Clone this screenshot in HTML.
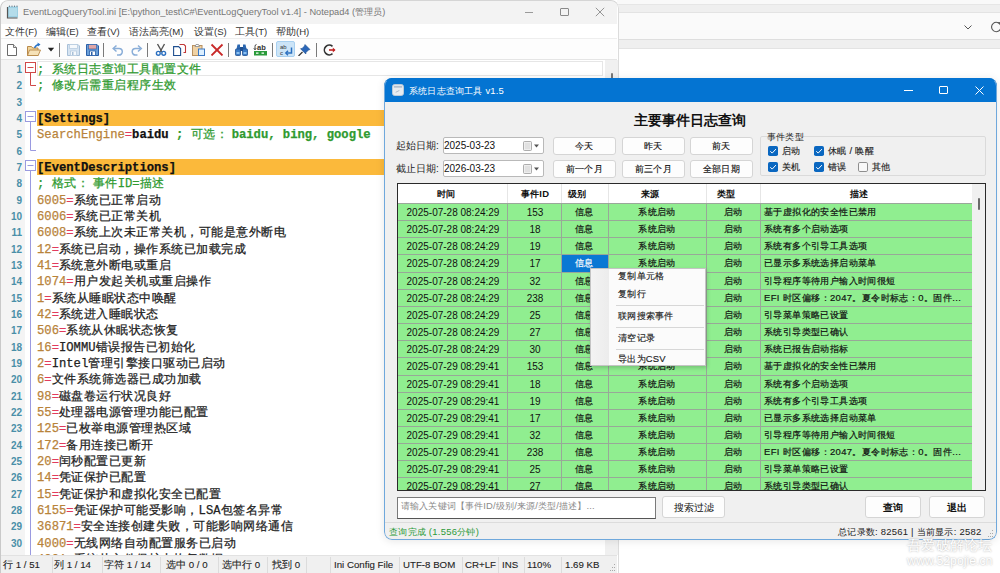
<!DOCTYPE html><html><head><meta charset="utf-8"><style>
*{box-sizing:border-box}
html,body{margin:0;padding:0}
body{width:1000px;height:573px;overflow:hidden;position:relative;background:#fff;font-family:"Liberation Sans",sans-serif;}
.a{position:absolute}
.t{position:absolute;white-space:nowrap}
</style></head><body>
<div class="a" style="left:0;top:0;width:1000px;height:573px;background:#fff"></div><div class="a" style="left:617px;top:0;width:383px;height:4px;background:#f9f9f9"></div><div class="a" style="left:617px;top:4px;width:383px;height:9px;background:#efefef;border-top:1px solid #e6e6e6;border-bottom:1px solid #e3e3e3"></div><div class="a" style="left:617px;top:13px;width:383px;height:26px;background:#fafafa"></div><div class="a" style="left:617px;top:39px;width:383px;height:10px;background:#efefef;border-top:1px solid #dedede;border-bottom:1px solid #e3e3e3"></div><svg class="a" style="left:961px;top:23px" width="14" height="10" viewBox="0 0 14 10"><path d="M3.5 2.5 L7 6 L10.5 2.5" stroke="#555" stroke-width="1" fill="none"/></svg><svg class="a" style="left:990px;top:21px" width="12" height="12" viewBox="0 0 12 12"><path d="M10.5 4 A4.7 4.7 0 1 0 10.5 8" stroke="#555" stroke-width="1.1" fill="none"/><path d="M8 1.8 L10.8 1.5 L10.6 4.4" stroke="#555" stroke-width="1" fill="none"/></svg><div class="a" style="left:0;top:0;width:619px;height:573px;background:#fff;border-top-right-radius:8px;border-top-left-radius:8px;overflow:hidden"><div class="a" style="left:0;top:0;width:617px;height:24px;background:#f3f3f3"></div><svg class="a" style="left:6px;top:5px" width="14" height="14" viewBox="0 0 14 14"><rect x="2" y="1.5" width="10" height="11" fill="#9ccfe2"/><rect x="3" y="3" width="8" height="8" fill="#b4dcea"/><path d="M1.5 2v11h10" stroke="#555" stroke-width="1.2" fill="none"/><path d="M3 1.2h1M5.5 1.2h1M8 1.2h1M10.5 1.2h1" stroke="#456" stroke-width="1"/></svg><div class="t" style="left:23px;top:6px;font-size:9.25px;line-height:13px;color:#767676">EventLogQueryTool.ini [E:\python_test\C#\EventLogQueryTool v1.4] - Notepad4 (管理员)</div><div class="a" style="left:525px;top:12px;width:8px;height:1px;background:#9a9a9a"></div><div class="a" style="left:560px;top:8px;width:9px;height:8px;border:1px solid #8a8a8a;border-radius:1px"></div><svg class="a" style="left:595px;top:7px" width="10" height="10" viewBox="0 0 10 10"><path d="M0.8 0.8L9.2 9.2M9.2 0.8L0.8 9.2" stroke="#8a8a8a" stroke-width="0.9"/></svg><div class="a" style="left:0;top:24px;width:617px;height:15px;background:#fff;border-bottom:1px solid #eeeeee"></div><div class="t" style="left:5px;top:26px;font-size:9.6px;line-height:12px;color:#333">文件(F)</div><div class="t" style="left:46px;top:26px;font-size:9.6px;line-height:12px;color:#333">编辑(E)</div><div class="t" style="left:87px;top:26px;font-size:9.6px;line-height:12px;color:#333">查看(V)</div><div class="t" style="left:129px;top:26px;font-size:9.6px;line-height:12px;color:#333">语法高亮(M)</div><div class="t" style="left:194px;top:26px;font-size:9.6px;line-height:12px;color:#333">设置(S)</div><div class="t" style="left:235px;top:26px;font-size:9.6px;line-height:12px;color:#333">工具(T)</div><div class="t" style="left:276px;top:26px;font-size:9.6px;line-height:12px;color:#333">帮助(H)</div><div class="a" style="left:0;top:39px;width:617px;height:21px;background:#fdfdfd;border-bottom:1px solid #e5e5e5"></div><svg class="a" style="left:0px;top:40px" width="20" height="16" viewBox="0 0 20 16"><path d="M7.5 4.5h6l3 3v8h-9z" fill="#fff" stroke="#6a6a6a" stroke-width="1"/><path d="M13.5 4.5v3h3" fill="#e8e8e8" stroke="#6a6a6a" stroke-width="0.9"/></svg><svg class="a" style="left:24px;top:40px" width="20" height="16" viewBox="0 0 20 16"><path d="M3.5 6.5h4l1.2 1.5h5.3v7.5h-10.5z" fill="#f0d49a" stroke="#b8894a" stroke-width="1"/><path d="M3.5 15.5l2-5.5h11l-2.3 5.5z" fill="#f6e2b8" stroke="#b8894a" stroke-width="0.9"/><path d="M10.5 8 Q12 4.8 14.5 4.5" stroke="#2a74c8" stroke-width="1.5" fill="none"/><path d="M13.5 2.6l3 1.9-2.6 2.1z" fill="#2a74c8"/></svg><svg class="a" style="left:47px;top:47px" width="8" height="5" viewBox="0 0 8 5"><path d="M0.8 0.8h6.4l-3.2 3.6z" fill="#222"/></svg><div class="a" style="left:59px;top:43px;width:1px;height:14px;background:#7a7a7a"></div><svg class="a" style="left:64px;top:40px" width="20" height="16" viewBox="0 0 20 16"><path d="M3.5 4.5h10.5l1.5 1.5v9.5h-12z" fill="#d6e4f2" stroke="#a8c0d8" stroke-width="1"/><rect x="5.5" y="4.5" width="8" height="4" fill="#f6f9fc" stroke="#b8cce0" stroke-width="0.8"/><rect x="6.5" y="11" width="6" height="4.5" fill="#f6f9fc" stroke="#b8cce0" stroke-width="0.8"/><rect x="8" y="12" width="1.5" height="3" fill="#a8c0d8"/></svg><svg class="a" style="left:83px;top:40px" width="20" height="16" viewBox="0 0 20 16"><path d="M3.5 4.5h10.5l1.5 1.5v9.5h-12z" fill="#6a9fd8" stroke="#2a5fa8" stroke-width="1"/><rect x="5.5" y="4.5" width="8" height="4.5" fill="#fff" stroke="#2a5fa8" stroke-width="0.7"/><path d="M5.8 6h7.4M5.8 8h7.4" stroke="#b83a3a" stroke-width="0.9"/><rect x="6.5" y="11" width="6" height="4.5" fill="#fff" stroke="#2a5fa8" stroke-width="0.8"/><rect x="8" y="12" width="1.5" height="3.5" fill="#2a5fa8"/></svg><div class="a" style="left:103px;top:43px;width:1px;height:14px;background:#7a7a7a"></div><svg class="a" style="left:108px;top:40px" width="20" height="16" viewBox="0 0 20 16"><path d="M6 8.5 H11 A3.3 3.3 0 0 1 11 15.1 H9" fill="none" stroke="#8aaed8" stroke-width="1.5"/><path d="M8.5 5.5 L5.2 8.5 L8.5 11.5" fill="none" stroke="#8aaed8" stroke-width="1.5"/></svg><svg class="a" style="left:127px;top:40px" width="20" height="16" viewBox="0 0 20 16"><path d="M13.5 8.5 H8.5 A3.3 3.3 0 0 0 8.5 15.1 H10.5" fill="none" stroke="#8aaed8" stroke-width="1.5"/><path d="M11 5.5 L14.3 8.5 L11 11.5" fill="none" stroke="#8aaed8" stroke-width="1.5"/></svg><div class="a" style="left:147px;top:43px;width:1px;height:14px;background:#7a7a7a"></div><svg class="a" style="left:152px;top:40px" width="20" height="16" viewBox="0 0 20 16"><path d="M5.5 4 L10 12 M12.5 4 L8 12" stroke="#555" stroke-width="1.4"/><circle cx="6.3" cy="13.3" r="1.9" fill="none" stroke="#2a6fc0" stroke-width="1.4"/><circle cx="11.7" cy="13.3" r="1.9" fill="none" stroke="#2a6fc0" stroke-width="1.4"/></svg><svg class="a" style="left:170px;top:40px" width="20" height="16" viewBox="0 0 20 16"><path d="M9.5 4.5h4.5l1.5 1.5v6.5h-2" fill="none" stroke="#c03838" stroke-width="1.1"/><path d="M3.6 6.6h5l2 2v6.9h-7z" fill="#fff" stroke="#1f4f8f" stroke-width="1.1"/></svg><svg class="a" style="left:189px;top:40px" width="20" height="16" viewBox="0 0 20 16"><rect x="3.5" y="5.5" width="9.5" height="10" fill="#f0d2a4" stroke="#b89060" stroke-width="1"/><path d="M6 6.5 L7 4.5 H9.5 L10.5 6.5 Z" fill="#fff" stroke="#888" stroke-width="0.8"/><rect x="9.5" y="9" width="6" height="6.5" fill="#dcefff" stroke="#3a78c4" stroke-width="1"/></svg><svg class="a" style="left:208px;top:40px" width="20" height="16" viewBox="0 0 20 16"><path d="M3.5 4.5 L14.5 15.5 M14.5 4.5 L3.5 15.5" stroke="#c82828" stroke-width="1.8"/></svg><div class="a" style="left:228px;top:43px;width:1px;height:14px;background:#7a7a7a"></div><svg class="a" style="left:232px;top:40px" width="20" height="16" viewBox="0 0 20 16"><path d="M4.5 9 L5.5 4.5 H8 V9 Z M11 9 V4.5 H13.5 L14.5 9 Z" fill="#2a66b0"/><rect x="3.5" y="9" width="5" height="6.5" rx="0.8" fill="#3a7cc8" stroke="#1f4f8f" stroke-width="0.8"/><rect x="10.5" y="9" width="5" height="6.5" rx="0.8" fill="#3a7cc8" stroke="#1f4f8f" stroke-width="0.8"/><rect x="8" y="7" width="3" height="4" fill="#1f4f8f"/><rect x="4.5" y="12" width="3" height="2" fill="#8cc0f0"/><rect x="11.5" y="12" width="3" height="2" fill="#8cc0f0"/></svg><svg class="a" style="left:251px;top:40px" width="20" height="16" viewBox="0 0 20 16"><path d="M5.5 4.5 Q4 4.5 4 6.5 V9.5 M2.8 8.3 L4 9.8 L5.2 8.3" stroke="#333" stroke-width="0.9" fill="none"/><text x="6" y="10" font-family="Liberation Sans" font-size="7.5" font-weight="bold" fill="#333">ab</text><rect x="3" y="11" width="13" height="4.5" fill="#2a9a3a"/><path d="M5 13.2h2.5M10.5 13.2h2.5" stroke="#fff" stroke-width="1.3"/></svg><div class="a" style="left:272px;top:43px;width:1px;height:14px;background:#7a7a7a"></div><div class="a" style="left:276px;top:41px;width:19px;height:16px;background:#cce4f7;border:1px solid #a8d0f0;border-radius:2px"></div><svg class="a" style="left:277px;top:40px" width="20" height="16" viewBox="0 0 20 16"><text x="3" y="8.5" font-family="Liberation Sans" font-size="6" fill="#333">ab</text><text x="3" y="14.5" font-family="Liberation Sans" font-size="6" fill="#333">c</text><path d="M14.5 7.5 V13 H9.5" stroke="#2a6fc0" stroke-width="1.5" fill="none"/><path d="M11 10.8 L8.8 13 L11 15.2" stroke="#2a6fc0" stroke-width="1.4" fill="none"/></svg><svg class="a" style="left:295px;top:40px" width="20" height="16" viewBox="0 0 20 16"><path d="M10 4.5 L15 9.5 L13.5 10 L11 12.5 L10.8 14 L5.5 8.7 L7 8.5 L9.5 6 Z" fill="#2a66b8" stroke="#1f4f8f" stroke-width="0.6"/><path d="M7.5 12 L3.5 16" stroke="#333" stroke-width="1.2"/></svg><div class="a" style="left:316px;top:43px;width:1px;height:14px;background:#7a7a7a"></div><svg class="a" style="left:320px;top:40px" width="20" height="16" viewBox="0 0 20 16"><path d="M12.5 6.3 A4.9 4.9 0 1 0 12.5 13.7" stroke="#333" stroke-width="1.6" fill="none"/><path d="M9 10 H14.5" stroke="#c02020" stroke-width="1.6"/><path d="M12.8 7.5 L15.5 10 L12.8 12.5 Z" fill="#c02020"/></svg><div class="a" style="left:0;top:60px;width:25px;height:495px;background:#f4f4f4"></div><div class="a" style="left:37px;top:61px;width:566px;height:15px;border:1px solid #e6e6e6"></div><div class="a" style="left:605px;top:60px;width:13px;height:495px;background:#f0f0f0"></div><div class="a" style="left:611px;top:73px;width:1.5px;height:6px;background:#777;border-radius:1px"></div><div class="t" style="left:0;top:62.00px;width:22px;text-align:right;font-family:'Liberation Sans',sans-serif;font-size:10px;font-weight:bold;line-height:16px;color:#4a8fa8">1</div><div class="t" style="left:37px;top:62.00px;font-family:'Liberation Mono',monospace;font-size:12.2px;line-height:16px;-webkit-text-stroke:0.25px currentColor;color:#2f9a2f">; <span style="font-size:12.45px;font-weight:500;letter-spacing:0.5px">系统日志查询工具配置文件</span></div><div class="t" style="left:0;top:78.33px;width:22px;text-align:right;font-family:'Liberation Sans',sans-serif;font-size:10px;font-weight:bold;line-height:16px;color:#4a8fa8">2</div><div class="t" style="left:37px;top:78.33px;font-family:'Liberation Mono',monospace;font-size:12.2px;line-height:16px;-webkit-text-stroke:0.25px currentColor;color:#2f9a2f">; <span style="font-size:12.45px;font-weight:500;letter-spacing:0.5px">修改后需重启程序生效</span></div><div class="t" style="left:0;top:94.66px;width:22px;text-align:right;font-family:'Liberation Sans',sans-serif;font-size:10px;font-weight:bold;line-height:16px;color:#4a8fa8">3</div><div class="t" style="left:0;top:110.99px;width:22px;text-align:right;font-family:'Liberation Sans',sans-serif;font-size:10px;font-weight:bold;line-height:16px;color:#4a8fa8">4</div><div class="a" style="left:37px;top:109.99px;width:567px;height:16px;background:#fbb93b"></div><div class="t" style="left:37px;top:110.99px;font-family:'Liberation Mono',monospace;font-size:12.2px;line-height:16px;-webkit-text-stroke:0.25px currentColor;color:#111;font-weight:bold">[Settings]</div><div class="t" style="left:0;top:127.32px;width:22px;text-align:right;font-family:'Liberation Sans',sans-serif;font-size:10px;font-weight:bold;line-height:16px;color:#4a8fa8">5</div><div class="t" style="left:37px;top:127.32px;font-family:'Liberation Mono',monospace;font-size:12.2px;line-height:16px;-webkit-text-stroke:0.25px currentColor;color:#b8833a">SearchEngine<span style="color:#e23c5c">=</span><span style="color:#111;font-weight:bold">baidu</span><span style="color:#2f9a2f;font-weight:bold"> ; <span style="font-size:12.45px;font-weight:500;letter-spacing:0.5px">可选<span style="margin-right:3.5px">：</span></span>baidu, bing, google</span></div><div class="t" style="left:0;top:143.65px;width:22px;text-align:right;font-family:'Liberation Sans',sans-serif;font-size:10px;font-weight:bold;line-height:16px;color:#4a8fa8">6</div><div class="t" style="left:0;top:159.98px;width:22px;text-align:right;font-family:'Liberation Sans',sans-serif;font-size:10px;font-weight:bold;line-height:16px;color:#4a8fa8">7</div><div class="a" style="left:37px;top:158.98px;width:567px;height:16px;background:#fbb93b"></div><div class="t" style="left:37px;top:159.98px;font-family:'Liberation Mono',monospace;font-size:12.2px;line-height:16px;-webkit-text-stroke:0.25px currentColor;color:#111;font-weight:bold">[EventDescriptions]</div><div class="t" style="left:0;top:176.31px;width:22px;text-align:right;font-family:'Liberation Sans',sans-serif;font-size:10px;font-weight:bold;line-height:16px;color:#4a8fa8">8</div><div class="t" style="left:37px;top:176.31px;font-family:'Liberation Mono',monospace;font-size:12.2px;line-height:16px;-webkit-text-stroke:0.25px currentColor;color:#2f9a2f">; <span style="font-size:12.45px;font-weight:500;letter-spacing:0.5px">格式<span style="margin-right:3.5px">：</span>事件</span>ID=<span style="font-size:12.45px;font-weight:500;letter-spacing:0.5px">描述</span></div><div class="t" style="left:0;top:192.64px;width:22px;text-align:right;font-family:'Liberation Sans',sans-serif;font-size:10px;font-weight:bold;line-height:16px;color:#4a8fa8">9</div><div class="t" style="left:37px;top:192.64px;font-family:'Liberation Mono',monospace;font-size:12.2px;line-height:16px;-webkit-text-stroke:0.25px currentColor;color:#b8833a">6005<span style="color:#e23c5c">=</span><span style="color:#222"><span style="font-size:12.45px;font-weight:500;letter-spacing:0.5px">系统已正常启动</span></span></div><div class="t" style="left:0;top:208.97px;width:22px;text-align:right;font-family:'Liberation Sans',sans-serif;font-size:10px;font-weight:bold;line-height:16px;color:#4a8fa8">10</div><div class="t" style="left:37px;top:208.97px;font-family:'Liberation Mono',monospace;font-size:12.2px;line-height:16px;-webkit-text-stroke:0.25px currentColor;color:#b8833a">6006<span style="color:#e23c5c">=</span><span style="color:#222"><span style="font-size:12.45px;font-weight:500;letter-spacing:0.5px">系统已正常关机</span></span></div><div class="t" style="left:0;top:225.30px;width:22px;text-align:right;font-family:'Liberation Sans',sans-serif;font-size:10px;font-weight:bold;line-height:16px;color:#4a8fa8">11</div><div class="t" style="left:37px;top:225.30px;font-family:'Liberation Mono',monospace;font-size:12.2px;line-height:16px;-webkit-text-stroke:0.25px currentColor;color:#b8833a">6008<span style="color:#e23c5c">=</span><span style="color:#222"><span style="font-size:12.45px;font-weight:500;letter-spacing:0.5px">系统上次未正常关机，可能是意外断电</span></span></div><div class="t" style="left:0;top:241.63px;width:22px;text-align:right;font-family:'Liberation Sans',sans-serif;font-size:10px;font-weight:bold;line-height:16px;color:#4a8fa8">12</div><div class="t" style="left:37px;top:241.63px;font-family:'Liberation Mono',monospace;font-size:12.2px;line-height:16px;-webkit-text-stroke:0.25px currentColor;color:#b8833a">12<span style="color:#e23c5c">=</span><span style="color:#222"><span style="font-size:12.45px;font-weight:500;letter-spacing:0.5px">系统已启动，操作系统已加载完成</span></span></div><div class="t" style="left:0;top:257.96px;width:22px;text-align:right;font-family:'Liberation Sans',sans-serif;font-size:10px;font-weight:bold;line-height:16px;color:#4a8fa8">13</div><div class="t" style="left:37px;top:257.96px;font-family:'Liberation Mono',monospace;font-size:12.2px;line-height:16px;-webkit-text-stroke:0.25px currentColor;color:#b8833a">41<span style="color:#e23c5c">=</span><span style="color:#222"><span style="font-size:12.45px;font-weight:500;letter-spacing:0.5px">系统意外断电或重启</span></span></div><div class="t" style="left:0;top:274.29px;width:22px;text-align:right;font-family:'Liberation Sans',sans-serif;font-size:10px;font-weight:bold;line-height:16px;color:#4a8fa8">14</div><div class="t" style="left:37px;top:274.29px;font-family:'Liberation Mono',monospace;font-size:12.2px;line-height:16px;-webkit-text-stroke:0.25px currentColor;color:#b8833a">1074<span style="color:#e23c5c">=</span><span style="color:#222"><span style="font-size:12.45px;font-weight:500;letter-spacing:0.5px">用户发起关机或重启操作</span></span></div><div class="t" style="left:0;top:290.62px;width:22px;text-align:right;font-family:'Liberation Sans',sans-serif;font-size:10px;font-weight:bold;line-height:16px;color:#4a8fa8">15</div><div class="t" style="left:37px;top:290.62px;font-family:'Liberation Mono',monospace;font-size:12.2px;line-height:16px;-webkit-text-stroke:0.25px currentColor;color:#b8833a">1<span style="color:#e23c5c">=</span><span style="color:#222"><span style="font-size:12.45px;font-weight:500;letter-spacing:0.5px">系统从睡眠状态中唤醒</span></span></div><div class="t" style="left:0;top:306.95px;width:22px;text-align:right;font-family:'Liberation Sans',sans-serif;font-size:10px;font-weight:bold;line-height:16px;color:#4a8fa8">16</div><div class="t" style="left:37px;top:306.95px;font-family:'Liberation Mono',monospace;font-size:12.2px;line-height:16px;-webkit-text-stroke:0.25px currentColor;color:#b8833a">42<span style="color:#e23c5c">=</span><span style="color:#222"><span style="font-size:12.45px;font-weight:500;letter-spacing:0.5px">系统进入睡眠状态</span></span></div><div class="t" style="left:0;top:323.28px;width:22px;text-align:right;font-family:'Liberation Sans',sans-serif;font-size:10px;font-weight:bold;line-height:16px;color:#4a8fa8">17</div><div class="t" style="left:37px;top:323.28px;font-family:'Liberation Mono',monospace;font-size:12.2px;line-height:16px;-webkit-text-stroke:0.25px currentColor;color:#b8833a">506<span style="color:#e23c5c">=</span><span style="color:#222"><span style="font-size:12.45px;font-weight:500;letter-spacing:0.5px">系统从休眠状态恢复</span></span></div><div class="t" style="left:0;top:339.61px;width:22px;text-align:right;font-family:'Liberation Sans',sans-serif;font-size:10px;font-weight:bold;line-height:16px;color:#4a8fa8">18</div><div class="t" style="left:37px;top:339.61px;font-family:'Liberation Mono',monospace;font-size:12.2px;line-height:16px;-webkit-text-stroke:0.25px currentColor;color:#b8833a">16<span style="color:#e23c5c">=</span><span style="color:#222">IOMMU<span style="font-size:12.45px;font-weight:500;letter-spacing:0.5px">错误报告已初始化</span></span></div><div class="t" style="left:0;top:355.94px;width:22px;text-align:right;font-family:'Liberation Sans',sans-serif;font-size:10px;font-weight:bold;line-height:16px;color:#4a8fa8">19</div><div class="t" style="left:37px;top:355.94px;font-family:'Liberation Mono',monospace;font-size:12.2px;line-height:16px;-webkit-text-stroke:0.25px currentColor;color:#b8833a">2<span style="color:#e23c5c">=</span><span style="color:#222">Intel<span style="font-size:12.45px;font-weight:500;letter-spacing:0.5px">管理引擎接口驱动已启动</span></span></div><div class="t" style="left:0;top:372.27px;width:22px;text-align:right;font-family:'Liberation Sans',sans-serif;font-size:10px;font-weight:bold;line-height:16px;color:#4a8fa8">20</div><div class="t" style="left:37px;top:372.27px;font-family:'Liberation Mono',monospace;font-size:12.2px;line-height:16px;-webkit-text-stroke:0.25px currentColor;color:#b8833a">6<span style="color:#e23c5c">=</span><span style="color:#222"><span style="font-size:12.45px;font-weight:500;letter-spacing:0.5px">文件系统筛选器已成功加载</span></span></div><div class="t" style="left:0;top:388.60px;width:22px;text-align:right;font-family:'Liberation Sans',sans-serif;font-size:10px;font-weight:bold;line-height:16px;color:#4a8fa8">21</div><div class="t" style="left:37px;top:388.60px;font-family:'Liberation Mono',monospace;font-size:12.2px;line-height:16px;-webkit-text-stroke:0.25px currentColor;color:#b8833a">98<span style="color:#e23c5c">=</span><span style="color:#222"><span style="font-size:12.45px;font-weight:500;letter-spacing:0.5px">磁盘卷运行状况良好</span></span></div><div class="t" style="left:0;top:404.93px;width:22px;text-align:right;font-family:'Liberation Sans',sans-serif;font-size:10px;font-weight:bold;line-height:16px;color:#4a8fa8">22</div><div class="t" style="left:37px;top:404.93px;font-family:'Liberation Mono',monospace;font-size:12.2px;line-height:16px;-webkit-text-stroke:0.25px currentColor;color:#b8833a">55<span style="color:#e23c5c">=</span><span style="color:#222"><span style="font-size:12.45px;font-weight:500;letter-spacing:0.5px">处理器电源管理功能已配置</span></span></div><div class="t" style="left:0;top:421.26px;width:22px;text-align:right;font-family:'Liberation Sans',sans-serif;font-size:10px;font-weight:bold;line-height:16px;color:#4a8fa8">23</div><div class="t" style="left:37px;top:421.26px;font-family:'Liberation Mono',monospace;font-size:12.2px;line-height:16px;-webkit-text-stroke:0.25px currentColor;color:#b8833a">125<span style="color:#e23c5c">=</span><span style="color:#222"><span style="font-size:12.45px;font-weight:500;letter-spacing:0.5px">已枚举电源管理热区域</span></span></div><div class="t" style="left:0;top:437.59px;width:22px;text-align:right;font-family:'Liberation Sans',sans-serif;font-size:10px;font-weight:bold;line-height:16px;color:#4a8fa8">24</div><div class="t" style="left:37px;top:437.59px;font-family:'Liberation Mono',monospace;font-size:12.2px;line-height:16px;-webkit-text-stroke:0.25px currentColor;color:#b8833a">172<span style="color:#e23c5c">=</span><span style="color:#222"><span style="font-size:12.45px;font-weight:500;letter-spacing:0.5px">备用连接已断开</span></span></div><div class="t" style="left:0;top:453.92px;width:22px;text-align:right;font-family:'Liberation Sans',sans-serif;font-size:10px;font-weight:bold;line-height:16px;color:#4a8fa8">25</div><div class="t" style="left:37px;top:453.92px;font-family:'Liberation Mono',monospace;font-size:12.2px;line-height:16px;-webkit-text-stroke:0.25px currentColor;color:#b8833a">20<span style="color:#e23c5c">=</span><span style="color:#222"><span style="font-size:12.45px;font-weight:500;letter-spacing:0.5px">闰秒配置已更新</span></span></div><div class="t" style="left:0;top:470.25px;width:22px;text-align:right;font-family:'Liberation Sans',sans-serif;font-size:10px;font-weight:bold;line-height:16px;color:#4a8fa8">26</div><div class="t" style="left:37px;top:470.25px;font-family:'Liberation Mono',monospace;font-size:12.2px;line-height:16px;-webkit-text-stroke:0.25px currentColor;color:#b8833a">14<span style="color:#e23c5c">=</span><span style="color:#222"><span style="font-size:12.45px;font-weight:500;letter-spacing:0.5px">凭证保护已配置</span></span></div><div class="t" style="left:0;top:486.58px;width:22px;text-align:right;font-family:'Liberation Sans',sans-serif;font-size:10px;font-weight:bold;line-height:16px;color:#4a8fa8">27</div><div class="t" style="left:37px;top:486.58px;font-family:'Liberation Mono',monospace;font-size:12.2px;line-height:16px;-webkit-text-stroke:0.25px currentColor;color:#b8833a">15<span style="color:#e23c5c">=</span><span style="color:#222"><span style="font-size:12.45px;font-weight:500;letter-spacing:0.5px">凭证保护和虚拟化安全已配置</span></span></div><div class="t" style="left:0;top:502.91px;width:22px;text-align:right;font-family:'Liberation Sans',sans-serif;font-size:10px;font-weight:bold;line-height:16px;color:#4a8fa8">28</div><div class="t" style="left:37px;top:502.91px;font-family:'Liberation Mono',monospace;font-size:12.2px;line-height:16px;-webkit-text-stroke:0.25px currentColor;color:#b8833a">6155<span style="color:#e23c5c">=</span><span style="color:#222"><span style="font-size:12.45px;font-weight:500;letter-spacing:0.5px">凭证保护可能受影响，</span>LSA<span style="font-size:12.45px;font-weight:500;letter-spacing:0.5px">包签名异常</span></span></div><div class="t" style="left:0;top:519.24px;width:22px;text-align:right;font-family:'Liberation Sans',sans-serif;font-size:10px;font-weight:bold;line-height:16px;color:#4a8fa8">29</div><div class="t" style="left:37px;top:519.24px;font-family:'Liberation Mono',monospace;font-size:12.2px;line-height:16px;-webkit-text-stroke:0.25px currentColor;color:#b8833a">36871<span style="color:#e23c5c">=</span><span style="color:#222"><span style="font-size:12.45px;font-weight:500;letter-spacing:0.5px">安全连接创建失败，可能影响网络通信</span></span></div><div class="t" style="left:0;top:535.57px;width:22px;text-align:right;font-family:'Liberation Sans',sans-serif;font-size:10px;font-weight:bold;line-height:16px;color:#4a8fa8">30</div><div class="t" style="left:37px;top:535.57px;font-family:'Liberation Mono',monospace;font-size:12.2px;line-height:16px;-webkit-text-stroke:0.25px currentColor;color:#b8833a">4000<span style="color:#e23c5c">=</span><span style="color:#222"><span style="font-size:12.45px;font-weight:500;letter-spacing:0.5px">无线网络自动配置服务已启动</span></span></div><div class="t" style="left:0;top:551.90px;width:22px;text-align:right;font-family:'Liberation Sans',sans-serif;font-size:10px;font-weight:bold;line-height:16px;color:#4a8fa8">31</div><div class="t" style="left:37px;top:551.90px;font-family:'Liberation Mono',monospace;font-size:12.2px;line-height:16px;-webkit-text-stroke:0.25px currentColor;color:#b8833a">4001<span style="color:#e23c5c">=</span><span style="color:#222"><span style="font-size:12.45px;font-weight:500;letter-spacing:0.5px">系统从文件保护中恢复数据</span></span></div><svg class="a" style="left:24px;top:59px" width="13" height="496" viewBox="0 0 13 496"><rect x="1.5" y="3.5" width="10" height="10" fill="#fff" stroke="#d04848" stroke-width="1"/><path d="M3.5 8.5h6" stroke="#d04848"/><path d="M6.5 13.5V26.5H12" stroke="#d04848" fill="none"/><rect x="1.5" y="52.5" width="10" height="10" fill="#fff" stroke="#9a9ae0" stroke-width="1"/><path d="M3.5 57.5h6" stroke="#9a9ae0"/><path d="M6.5 62.5V91.5H12" stroke="#9a9ae0" fill="none"/><rect x="1.5" y="101.5" width="10" height="10" fill="#fff" stroke="#9a9ae0" stroke-width="1"/><path d="M3.5 106.5h6" stroke="#9a9ae0"/><path d="M6.5 111.5V496" stroke="#9a9ae0" fill="none"/></svg><div class="a" style="left:0;top:555px;width:617px;height:18px;background:#f0f0f0;border-top:1px solid #e2e2e2"></div><div class="a" style="left:52px;top:557px;width:1px;height:16px;background:#dcdcdc"></div><div class="a" style="left:102px;top:557px;width:1px;height:16px;background:#dcdcdc"></div><div class="a" style="left:160px;top:557px;width:1px;height:16px;background:#dcdcdc"></div><div class="a" style="left:218px;top:557px;width:1px;height:16px;background:#dcdcdc"></div><div class="a" style="left:267px;top:557px;width:1px;height:16px;background:#dcdcdc"></div><div class="a" style="left:306px;top:557px;width:1px;height:16px;background:#dcdcdc"></div><div class="a" style="left:330px;top:557px;width:1px;height:16px;background:#dcdcdc"></div><div class="a" style="left:399px;top:557px;width:1px;height:16px;background:#dcdcdc"></div><div class="a" style="left:462px;top:557px;width:1px;height:16px;background:#dcdcdc"></div><div class="a" style="left:498px;top:557px;width:1px;height:16px;background:#dcdcdc"></div><div class="a" style="left:524px;top:557px;width:1px;height:16px;background:#dcdcdc"></div><div class="a" style="left:561px;top:557px;width:1px;height:16px;background:#dcdcdc"></div><div class="t" style="left:3px;top:558.5px;font-size:9.7px;line-height:12px;color:#222;-webkit-text-stroke:0.1px #222">行 1 / 51</div><div class="t" style="left:54px;top:558.5px;font-size:9.7px;line-height:12px;color:#222;-webkit-text-stroke:0.1px #222">列 1 / 14</div><div class="t" style="left:104px;top:558.5px;font-size:9.7px;line-height:12px;color:#222;-webkit-text-stroke:0.1px #222">字符 1 / 14</div><div class="t" style="left:166px;top:558.5px;font-size:9.7px;line-height:12px;color:#222;-webkit-text-stroke:0.1px #222">选中 0 / 0</div><div class="t" style="left:222px;top:558.5px;font-size:9.7px;line-height:12px;color:#222;-webkit-text-stroke:0.1px #222">选中行 0</div><div class="t" style="left:272px;top:558.5px;font-size:9.7px;line-height:12px;color:#222;-webkit-text-stroke:0.1px #222">找到 0</div><div class="t" style="left:334px;top:558.5px;font-size:9.7px;line-height:12px;color:#222;-webkit-text-stroke:0.1px #222">Ini Config File</div><div class="t" style="left:403px;top:558.5px;font-size:9.7px;line-height:12px;color:#222;-webkit-text-stroke:0.1px #222">UTF-8 BOM</div><div class="t" style="left:465px;top:558.5px;font-size:9.7px;line-height:12px;color:#222;-webkit-text-stroke:0.1px #222">CR+LF</div><div class="t" style="left:502px;top:558.5px;font-size:9.7px;line-height:12px;color:#222;-webkit-text-stroke:0.1px #222">INS</div><div class="t" style="left:527px;top:558.5px;font-size:9.7px;line-height:12px;color:#222;-webkit-text-stroke:0.1px #222">110%</div><div class="t" style="left:565px;top:558.5px;font-size:9.7px;line-height:12px;color:#222;-webkit-text-stroke:0.1px #222">1.69 KB</div><div class="a" style="left:0;top:0;width:619px;height:573px;border-left:1px solid #c9c9c9;border-right:1px solid #dcdcdc;border-top:1px solid #d5d5d5;border-top-right-radius:8px;border-top-left-radius:8px"></div><svg class="a" style="left:607px;top:563px" width="9" height="9" viewBox="0 0 9 9"><g fill="#a8a8a8"><rect x="7" y="1" width="1" height="1"/><rect x="5" y="4" width="1" height="1"/><rect x="7" y="4" width="1" height="1"/><rect x="3" y="7" width="1" height="1"/><rect x="5" y="7" width="1" height="1"/><rect x="7" y="7" width="1" height="1"/></g></svg></div><div class="a" style="left:384px;top:78px;width:613px;height:462px;background:#f0f0f0;border-radius:8px;overflow:hidden;box-shadow:0 1px 8px rgba(0,0,0,0.10)"><div class="a" style="left:0;top:0;width:613px;height:23.5px;background:#0474d2"></div><svg class="a" style="left:8px;top:5.5px" width="12" height="12" viewBox="0 0 13 13"><rect x="0.5" y="0.5" width="12" height="12" rx="2.5" fill="#e6ebf0" stroke="#c0ccd8"/><rect x="2" y="2" width="9" height="2" fill="#b0bfcf"/><path d="M4 9 L8 7" stroke="#9ab" stroke-width="0.8"/></svg><div class="t" style="left:25px;top:6.5px;font-size:9.45px;letter-spacing:0.2px;line-height:12px;color:#fff">系统日志查询工具 v1.5</div><div class="a" style="left:520px;top:12px;width:9px;height:1px;background:#fff"></div><div class="a" style="left:555px;top:8px;width:9px;height:8px;border:1px solid #fff;border-radius:1px"></div><svg class="a" style="left:591px;top:8px" width="9" height="9" viewBox="0 0 9 9"><path d="M0.5 0.5L8.5 8.5M8.5 0.5L0.5 8.5" stroke="#fff" stroke-width="1"/></svg><div class="t" style="left:250px;top:34px;font-size:14px;line-height:16px;font-weight:bold;color:#111">主要事件日志查询</div><div class="t" style="left:12px;top:62px;font-size:10px;line-height:12px;color:#222">起始日期:</div><div class="a" style="left:59px;top:59px;width:101px;height:17px;background:#fff;border:1px solid #b9b9b9;border-radius:2px"></div><div class="t" style="left:60px;top:62px;font-size:10px;line-height:12px;color:#111">2025-03-23</div><svg class="a" style="left:139px;top:63px" width="18" height="10" viewBox="0 0 18 10"><rect x="0.5" y="0.5" width="8" height="9" rx="1" fill="#eee" stroke="#9a9a9a" stroke-width="0.8"/><path d="M2 3h5M2 5h5M2 7h5" stroke="#c4c4c4" stroke-width="0.6"/><path d="M11 3.5h5l-2.5 3z" fill="#555"/></svg><div class="t" style="left:12px;top:85px;font-size:10px;line-height:12px;color:#222">截止日期:</div><div class="a" style="left:59px;top:82px;width:101px;height:17px;background:#fff;border:1px solid #b9b9b9;border-radius:2px"></div><div class="t" style="left:60px;top:85px;font-size:10px;line-height:12px;color:#111">2026-03-23</div><svg class="a" style="left:139px;top:86px" width="18" height="10" viewBox="0 0 18 10"><rect x="0.5" y="0.5" width="8" height="9" rx="1" fill="#eee" stroke="#9a9a9a" stroke-width="0.8"/><path d="M2 3h5M2 5h5M2 7h5" stroke="#c4c4c4" stroke-width="0.6"/><path d="M11 3.5h5l-2.5 3z" fill="#555"/></svg><div class="a" style="left:169px;top:59px;width:63px;height:18px;background:#fdfdfd;border:1px solid #d5d5d5;border-radius:3px;font-size:9.45px;letter-spacing:0.1px;line-height:16px;-webkit-text-stroke:0.15px #111;text-align:center;color:#111">今天</div><div class="a" style="left:238px;top:59px;width:63px;height:18px;background:#fdfdfd;border:1px solid #d5d5d5;border-radius:3px;font-size:9.45px;letter-spacing:0.1px;line-height:16px;-webkit-text-stroke:0.15px #111;text-align:center;color:#111">昨天</div><div class="a" style="left:306px;top:59px;width:63px;height:18px;background:#fdfdfd;border:1px solid #d5d5d5;border-radius:3px;font-size:9.45px;letter-spacing:0.1px;line-height:16px;-webkit-text-stroke:0.15px #111;text-align:center;color:#111">前天</div><div class="a" style="left:169px;top:82px;width:63px;height:18px;background:#fdfdfd;border:1px solid #d5d5d5;border-radius:3px;font-size:9.45px;letter-spacing:0.1px;line-height:16px;-webkit-text-stroke:0.15px #111;text-align:center;color:#111">前一个月</div><div class="a" style="left:238px;top:82px;width:63px;height:18px;background:#fdfdfd;border:1px solid #d5d5d5;border-radius:3px;font-size:9.45px;letter-spacing:0.1px;line-height:16px;-webkit-text-stroke:0.15px #111;text-align:center;color:#111">前三个月</div><div class="a" style="left:306px;top:82px;width:63px;height:18px;background:#fdfdfd;border:1px solid #d5d5d5;border-radius:3px;font-size:9.45px;letter-spacing:0.1px;line-height:16px;-webkit-text-stroke:0.15px #111;text-align:center;color:#111">全部日期</div><div class="a" style="left:376px;top:58px;width:226px;height:40px;border:1px solid #dadada;border-radius:2px"></div><div class="t" style="left:383px;top:53px;font-size:9.45px;letter-spacing:0.2px;line-height:12px;color:#222">事件类型</div><svg class="a" style="left:384px;top:68px" width="10" height="10" viewBox="0 0 10 10"><rect width="10" height="10" rx="1.8" fill="#0a67c0"/><path d="M2.3 5.2 L4.2 7.1 L7.9 3.1" stroke="#fff" stroke-width="1" fill="none"/></svg><div class="t" style="left:398px;top:67px;font-size:9.45px;letter-spacing:0.3px;line-height:12px;color:#222;-webkit-text-stroke:0.15px #222">启动</div><svg class="a" style="left:430px;top:68px" width="10" height="10" viewBox="0 0 10 10"><rect width="10" height="10" rx="1.8" fill="#0a67c0"/><path d="M2.3 5.2 L4.2 7.1 L7.9 3.1" stroke="#fff" stroke-width="1" fill="none"/></svg><div class="t" style="left:444px;top:67px;font-size:9.45px;letter-spacing:0.3px;line-height:12px;color:#222;-webkit-text-stroke:0.15px #222">休眠 / 唤醒</div><svg class="a" style="left:384px;top:84px" width="10" height="10" viewBox="0 0 10 10"><rect width="10" height="10" rx="1.8" fill="#0a67c0"/><path d="M2.3 5.2 L4.2 7.1 L7.9 3.1" stroke="#fff" stroke-width="1" fill="none"/></svg><div class="t" style="left:398px;top:83px;font-size:9.45px;letter-spacing:0.3px;line-height:12px;color:#222;-webkit-text-stroke:0.15px #222">关机</div><svg class="a" style="left:430px;top:84px" width="10" height="10" viewBox="0 0 10 10"><rect width="10" height="10" rx="1.8" fill="#0a67c0"/><path d="M2.3 5.2 L4.2 7.1 L7.9 3.1" stroke="#fff" stroke-width="1" fill="none"/></svg><div class="t" style="left:444px;top:83px;font-size:9.45px;letter-spacing:0.3px;line-height:12px;color:#222;-webkit-text-stroke:0.15px #222">错误</div><div class="a" style="left:474px;top:84px;width:10px;height:10px;border:1px solid #8e8e8e;border-radius:1.8px;background:#f8f8f8"></div><div class="t" style="left:488px;top:83px;font-size:9.45px;letter-spacing:0.3px;line-height:12px;color:#222;-webkit-text-stroke:0.15px #222">其他</div><div class="a" style="left:13px;top:105px;width:589px;height:308px;background:#fff;border:1px solid #2a2a2a;overflow:hidden"><div class="t" style="left:-7px;top:4px;width:110px;text-align:center;font-size:9.45px;letter-spacing:0.3px;line-height:12px;font-weight:bold;color:#111">时间</div><div class="t" style="left:110px;top:4px;width:54px;text-align:center;font-size:9.45px;letter-spacing:0.3px;line-height:12px;font-weight:bold;color:#111">事件ID</div><div class="t" style="left:156px;top:4px;width:47px;text-align:center;font-size:9.45px;letter-spacing:0.3px;line-height:12px;font-weight:bold;color:#111">级别</div><div class="t" style="left:203.5px;top:4px;width:98px;text-align:center;font-size:9.45px;letter-spacing:0.3px;line-height:12px;font-weight:bold;color:#111">来源</div><div class="t" style="left:301px;top:4px;width:54px;text-align:center;font-size:9.45px;letter-spacing:0.3px;line-height:12px;font-weight:bold;color:#111">类型</div><div class="t" style="left:355.5px;top:4px;width:211px;text-align:center;font-size:9.45px;letter-spacing:0.3px;line-height:12px;font-weight:bold;color:#111">描述</div><div class="a" style="left:109px;top:0;width:1px;height:19px;background:#e6e6e6"></div><div class="a" style="left:163px;top:0;width:1px;height:19px;background:#e6e6e6"></div><div class="a" style="left:210px;top:0;width:1px;height:19px;background:#e6e6e6"></div><div class="a" style="left:308px;top:0;width:1px;height:19px;background:#e6e6e6"></div><div class="a" style="left:362px;top:0;width:1px;height:19px;background:#e6e6e6"></div><div class="a" style="left:0;top:19px;width:574px;height:289px;background:#90ee90"></div><div class="a" style="left:0;top:19px;width:574px;height:1px;background:#9aa89a"></div><div class="a" style="left:0;top:36.15px;width:574px;height:1px;background:#98a898"></div><div class="t" style="left:0;top:23.00px;width:110px;text-align:center;font-size:10px;line-height:12px;color:#111">2025-07-28 08:24:29</div><div class="t" style="left:110px;top:23.00px;width:54px;text-align:center;font-size:10px;line-height:12px;color:#111">153</div><div class="t" style="left:163px;top:22.00px;width:46px;-webkit-text-stroke:0.2px currentColor;text-align:center;font-size:9.45px;letter-spacing:0.4px;line-height:12px;color:#111">信息</div><div class="t" style="left:210px;top:22.00px;width:98px;-webkit-text-stroke:0.2px currentColor;text-align:center;font-size:9.45px;letter-spacing:0.4px;line-height:12px;color:#111">系统启动</div><div class="t" style="left:308px;top:22.00px;width:54px;-webkit-text-stroke:0.2px currentColor;text-align:center;font-size:9.45px;letter-spacing:0.4px;line-height:12px;color:#111">启动</div><div class="t" style="left:366px;top:22.00px;-webkit-text-stroke:0.2px currentColor;font-size:9.45px;letter-spacing:0.4px;line-height:12px;color:#111">基于虚拟化的安全性已禁用</div><div class="a" style="left:0;top:53.30px;width:574px;height:1px;background:#98a898"></div><div class="t" style="left:0;top:40.15px;width:110px;text-align:center;font-size:10px;line-height:12px;color:#111">2025-07-28 08:24:29</div><div class="t" style="left:110px;top:40.15px;width:54px;text-align:center;font-size:10px;line-height:12px;color:#111">18</div><div class="t" style="left:163px;top:39.15px;width:46px;-webkit-text-stroke:0.2px currentColor;text-align:center;font-size:9.45px;letter-spacing:0.4px;line-height:12px;color:#111">信息</div><div class="t" style="left:210px;top:39.15px;width:98px;-webkit-text-stroke:0.2px currentColor;text-align:center;font-size:9.45px;letter-spacing:0.4px;line-height:12px;color:#111">系统启动</div><div class="t" style="left:308px;top:39.15px;width:54px;-webkit-text-stroke:0.2px currentColor;text-align:center;font-size:9.45px;letter-spacing:0.4px;line-height:12px;color:#111">启动</div><div class="t" style="left:366px;top:39.15px;-webkit-text-stroke:0.2px currentColor;font-size:9.45px;letter-spacing:0.4px;line-height:12px;color:#111">系统有多个启动选项</div><div class="a" style="left:0;top:70.45px;width:574px;height:1px;background:#98a898"></div><div class="t" style="left:0;top:57.30px;width:110px;text-align:center;font-size:10px;line-height:12px;color:#111">2025-07-28 08:24:29</div><div class="t" style="left:110px;top:57.30px;width:54px;text-align:center;font-size:10px;line-height:12px;color:#111">19</div><div class="t" style="left:163px;top:56.30px;width:46px;-webkit-text-stroke:0.2px currentColor;text-align:center;font-size:9.45px;letter-spacing:0.4px;line-height:12px;color:#111">信息</div><div class="t" style="left:210px;top:56.30px;width:98px;-webkit-text-stroke:0.2px currentColor;text-align:center;font-size:9.45px;letter-spacing:0.4px;line-height:12px;color:#111">系统启动</div><div class="t" style="left:308px;top:56.30px;width:54px;-webkit-text-stroke:0.2px currentColor;text-align:center;font-size:9.45px;letter-spacing:0.4px;line-height:12px;color:#111">启动</div><div class="t" style="left:366px;top:56.30px;-webkit-text-stroke:0.2px currentColor;font-size:9.45px;letter-spacing:0.4px;line-height:12px;color:#111">系统有多个引导工具选项</div><div class="a" style="left:0;top:87.60px;width:574px;height:1px;background:#98a898"></div><div class="t" style="left:0;top:74.45px;width:110px;text-align:center;font-size:10px;line-height:12px;color:#111">2025-07-28 08:24:29</div><div class="t" style="left:110px;top:74.45px;width:54px;text-align:center;font-size:10px;line-height:12px;color:#111">17</div><div class="a" style="left:164px;top:71.45px;width:46px;height:16.15px;background:#0a78d4"></div><div class="t" style="left:163px;top:73.45px;width:46px;-webkit-text-stroke:0.2px currentColor;text-align:center;font-size:9.45px;letter-spacing:0.4px;line-height:12px;color:#fff">信息</div><div class="t" style="left:210px;top:73.45px;width:98px;-webkit-text-stroke:0.2px currentColor;text-align:center;font-size:9.45px;letter-spacing:0.4px;line-height:12px;color:#111">系统启动</div><div class="t" style="left:308px;top:73.45px;width:54px;-webkit-text-stroke:0.2px currentColor;text-align:center;font-size:9.45px;letter-spacing:0.4px;line-height:12px;color:#111">启动</div><div class="t" style="left:366px;top:73.45px;-webkit-text-stroke:0.2px currentColor;font-size:9.45px;letter-spacing:0.4px;line-height:12px;color:#111">已显示多系统选择启动菜单</div><div class="a" style="left:0;top:104.75px;width:574px;height:1px;background:#98a898"></div><div class="t" style="left:0;top:91.60px;width:110px;text-align:center;font-size:10px;line-height:12px;color:#111">2025-07-28 08:24:29</div><div class="t" style="left:110px;top:91.60px;width:54px;text-align:center;font-size:10px;line-height:12px;color:#111">32</div><div class="t" style="left:163px;top:90.60px;width:46px;-webkit-text-stroke:0.2px currentColor;text-align:center;font-size:9.45px;letter-spacing:0.4px;line-height:12px;color:#111">信息</div><div class="t" style="left:210px;top:90.60px;width:98px;-webkit-text-stroke:0.2px currentColor;text-align:center;font-size:9.45px;letter-spacing:0.4px;line-height:12px;color:#111">系统启动</div><div class="t" style="left:308px;top:90.60px;width:54px;-webkit-text-stroke:0.2px currentColor;text-align:center;font-size:9.45px;letter-spacing:0.4px;line-height:12px;color:#111">启动</div><div class="t" style="left:366px;top:90.60px;-webkit-text-stroke:0.2px currentColor;font-size:9.45px;letter-spacing:0.4px;line-height:12px;color:#111">引导程序等待用户输入时间很短</div><div class="a" style="left:0;top:121.90px;width:574px;height:1px;background:#98a898"></div><div class="t" style="left:0;top:108.75px;width:110px;text-align:center;font-size:10px;line-height:12px;color:#111">2025-07-28 08:24:29</div><div class="t" style="left:110px;top:108.75px;width:54px;text-align:center;font-size:10px;line-height:12px;color:#111">238</div><div class="t" style="left:163px;top:107.75px;width:46px;-webkit-text-stroke:0.2px currentColor;text-align:center;font-size:9.45px;letter-spacing:0.4px;line-height:12px;color:#111">信息</div><div class="t" style="left:210px;top:107.75px;width:98px;-webkit-text-stroke:0.2px currentColor;text-align:center;font-size:9.45px;letter-spacing:0.4px;line-height:12px;color:#111">系统启动</div><div class="t" style="left:308px;top:107.75px;width:54px;-webkit-text-stroke:0.2px currentColor;text-align:center;font-size:9.45px;letter-spacing:0.4px;line-height:12px;color:#111">启动</div><div class="t" style="left:366px;top:107.75px;-webkit-text-stroke:0.2px currentColor;font-size:9.45px;letter-spacing:0.4px;line-height:12px;color:#111">EFI 时区偏移：2047。夏令时标志：0。固件...</div><div class="a" style="left:0;top:139.05px;width:574px;height:1px;background:#98a898"></div><div class="t" style="left:0;top:125.90px;width:110px;text-align:center;font-size:10px;line-height:12px;color:#111">2025-07-28 08:24:29</div><div class="t" style="left:110px;top:125.90px;width:54px;text-align:center;font-size:10px;line-height:12px;color:#111">25</div><div class="t" style="left:163px;top:124.90px;width:46px;-webkit-text-stroke:0.2px currentColor;text-align:center;font-size:9.45px;letter-spacing:0.4px;line-height:12px;color:#111">信息</div><div class="t" style="left:210px;top:124.90px;width:98px;-webkit-text-stroke:0.2px currentColor;text-align:center;font-size:9.45px;letter-spacing:0.4px;line-height:12px;color:#111">系统启动</div><div class="t" style="left:308px;top:124.90px;width:54px;-webkit-text-stroke:0.2px currentColor;text-align:center;font-size:9.45px;letter-spacing:0.4px;line-height:12px;color:#111">启动</div><div class="t" style="left:366px;top:124.90px;-webkit-text-stroke:0.2px currentColor;font-size:9.45px;letter-spacing:0.4px;line-height:12px;color:#111">引导菜单策略已设置</div><div class="a" style="left:0;top:156.20px;width:574px;height:1px;background:#98a898"></div><div class="t" style="left:0;top:143.05px;width:110px;text-align:center;font-size:10px;line-height:12px;color:#111">2025-07-28 08:24:29</div><div class="t" style="left:110px;top:143.05px;width:54px;text-align:center;font-size:10px;line-height:12px;color:#111">27</div><div class="t" style="left:163px;top:142.05px;width:46px;-webkit-text-stroke:0.2px currentColor;text-align:center;font-size:9.45px;letter-spacing:0.4px;line-height:12px;color:#111">信息</div><div class="t" style="left:210px;top:142.05px;width:98px;-webkit-text-stroke:0.2px currentColor;text-align:center;font-size:9.45px;letter-spacing:0.4px;line-height:12px;color:#111">系统启动</div><div class="t" style="left:308px;top:142.05px;width:54px;-webkit-text-stroke:0.2px currentColor;text-align:center;font-size:9.45px;letter-spacing:0.4px;line-height:12px;color:#111">启动</div><div class="t" style="left:366px;top:142.05px;-webkit-text-stroke:0.2px currentColor;font-size:9.45px;letter-spacing:0.4px;line-height:12px;color:#111">系统引导类型已确认</div><div class="a" style="left:0;top:173.35px;width:574px;height:1px;background:#98a898"></div><div class="t" style="left:0;top:160.20px;width:110px;text-align:center;font-size:10px;line-height:12px;color:#111">2025-07-28 08:24:29</div><div class="t" style="left:110px;top:160.20px;width:54px;text-align:center;font-size:10px;line-height:12px;color:#111">30</div><div class="t" style="left:163px;top:159.20px;width:46px;-webkit-text-stroke:0.2px currentColor;text-align:center;font-size:9.45px;letter-spacing:0.4px;line-height:12px;color:#111">信息</div><div class="t" style="left:210px;top:159.20px;width:98px;-webkit-text-stroke:0.2px currentColor;text-align:center;font-size:9.45px;letter-spacing:0.4px;line-height:12px;color:#111">系统启动</div><div class="t" style="left:308px;top:159.20px;width:54px;-webkit-text-stroke:0.2px currentColor;text-align:center;font-size:9.45px;letter-spacing:0.4px;line-height:12px;color:#111">启动</div><div class="t" style="left:366px;top:159.20px;-webkit-text-stroke:0.2px currentColor;font-size:9.45px;letter-spacing:0.4px;line-height:12px;color:#111">系统已报告启动指标</div><div class="a" style="left:0;top:190.50px;width:574px;height:1px;background:#98a898"></div><div class="t" style="left:0;top:177.35px;width:110px;text-align:center;font-size:10px;line-height:12px;color:#111">2025-07-29 08:29:41</div><div class="t" style="left:110px;top:177.35px;width:54px;text-align:center;font-size:10px;line-height:12px;color:#111">153</div><div class="t" style="left:163px;top:176.35px;width:46px;-webkit-text-stroke:0.2px currentColor;text-align:center;font-size:9.45px;letter-spacing:0.4px;line-height:12px;color:#111">信息</div><div class="t" style="left:210px;top:176.35px;width:98px;-webkit-text-stroke:0.2px currentColor;text-align:center;font-size:9.45px;letter-spacing:0.4px;line-height:12px;color:#111">系统启动</div><div class="t" style="left:308px;top:176.35px;width:54px;-webkit-text-stroke:0.2px currentColor;text-align:center;font-size:9.45px;letter-spacing:0.4px;line-height:12px;color:#111">启动</div><div class="t" style="left:366px;top:176.35px;-webkit-text-stroke:0.2px currentColor;font-size:9.45px;letter-spacing:0.4px;line-height:12px;color:#111">基于虚拟化的安全性已禁用</div><div class="a" style="left:0;top:207.65px;width:574px;height:1px;background:#98a898"></div><div class="t" style="left:0;top:194.50px;width:110px;text-align:center;font-size:10px;line-height:12px;color:#111">2025-07-29 08:29:41</div><div class="t" style="left:110px;top:194.50px;width:54px;text-align:center;font-size:10px;line-height:12px;color:#111">18</div><div class="t" style="left:163px;top:193.50px;width:46px;-webkit-text-stroke:0.2px currentColor;text-align:center;font-size:9.45px;letter-spacing:0.4px;line-height:12px;color:#111">信息</div><div class="t" style="left:210px;top:193.50px;width:98px;-webkit-text-stroke:0.2px currentColor;text-align:center;font-size:9.45px;letter-spacing:0.4px;line-height:12px;color:#111">系统启动</div><div class="t" style="left:308px;top:193.50px;width:54px;-webkit-text-stroke:0.2px currentColor;text-align:center;font-size:9.45px;letter-spacing:0.4px;line-height:12px;color:#111">启动</div><div class="t" style="left:366px;top:193.50px;-webkit-text-stroke:0.2px currentColor;font-size:9.45px;letter-spacing:0.4px;line-height:12px;color:#111">系统有多个启动选项</div><div class="a" style="left:0;top:224.80px;width:574px;height:1px;background:#98a898"></div><div class="t" style="left:0;top:211.65px;width:110px;text-align:center;font-size:10px;line-height:12px;color:#111">2025-07-29 08:29:41</div><div class="t" style="left:110px;top:211.65px;width:54px;text-align:center;font-size:10px;line-height:12px;color:#111">19</div><div class="t" style="left:163px;top:210.65px;width:46px;-webkit-text-stroke:0.2px currentColor;text-align:center;font-size:9.45px;letter-spacing:0.4px;line-height:12px;color:#111">信息</div><div class="t" style="left:210px;top:210.65px;width:98px;-webkit-text-stroke:0.2px currentColor;text-align:center;font-size:9.45px;letter-spacing:0.4px;line-height:12px;color:#111">系统启动</div><div class="t" style="left:308px;top:210.65px;width:54px;-webkit-text-stroke:0.2px currentColor;text-align:center;font-size:9.45px;letter-spacing:0.4px;line-height:12px;color:#111">启动</div><div class="t" style="left:366px;top:210.65px;-webkit-text-stroke:0.2px currentColor;font-size:9.45px;letter-spacing:0.4px;line-height:12px;color:#111">系统有多个引导工具选项</div><div class="a" style="left:0;top:241.95px;width:574px;height:1px;background:#98a898"></div><div class="t" style="left:0;top:228.80px;width:110px;text-align:center;font-size:10px;line-height:12px;color:#111">2025-07-29 08:29:41</div><div class="t" style="left:110px;top:228.80px;width:54px;text-align:center;font-size:10px;line-height:12px;color:#111">17</div><div class="t" style="left:163px;top:227.80px;width:46px;-webkit-text-stroke:0.2px currentColor;text-align:center;font-size:9.45px;letter-spacing:0.4px;line-height:12px;color:#111">信息</div><div class="t" style="left:210px;top:227.80px;width:98px;-webkit-text-stroke:0.2px currentColor;text-align:center;font-size:9.45px;letter-spacing:0.4px;line-height:12px;color:#111">系统启动</div><div class="t" style="left:308px;top:227.80px;width:54px;-webkit-text-stroke:0.2px currentColor;text-align:center;font-size:9.45px;letter-spacing:0.4px;line-height:12px;color:#111">启动</div><div class="t" style="left:366px;top:227.80px;-webkit-text-stroke:0.2px currentColor;font-size:9.45px;letter-spacing:0.4px;line-height:12px;color:#111">已显示多系统选择启动菜单</div><div class="a" style="left:0;top:259.10px;width:574px;height:1px;background:#98a898"></div><div class="t" style="left:0;top:245.95px;width:110px;text-align:center;font-size:10px;line-height:12px;color:#111">2025-07-29 08:29:41</div><div class="t" style="left:110px;top:245.95px;width:54px;text-align:center;font-size:10px;line-height:12px;color:#111">32</div><div class="t" style="left:163px;top:244.95px;width:46px;-webkit-text-stroke:0.2px currentColor;text-align:center;font-size:9.45px;letter-spacing:0.4px;line-height:12px;color:#111">信息</div><div class="t" style="left:210px;top:244.95px;width:98px;-webkit-text-stroke:0.2px currentColor;text-align:center;font-size:9.45px;letter-spacing:0.4px;line-height:12px;color:#111">系统启动</div><div class="t" style="left:308px;top:244.95px;width:54px;-webkit-text-stroke:0.2px currentColor;text-align:center;font-size:9.45px;letter-spacing:0.4px;line-height:12px;color:#111">启动</div><div class="t" style="left:366px;top:244.95px;-webkit-text-stroke:0.2px currentColor;font-size:9.45px;letter-spacing:0.4px;line-height:12px;color:#111">引导程序等待用户输入时间很短</div><div class="a" style="left:0;top:276.25px;width:574px;height:1px;background:#98a898"></div><div class="t" style="left:0;top:263.10px;width:110px;text-align:center;font-size:10px;line-height:12px;color:#111">2025-07-29 08:29:41</div><div class="t" style="left:110px;top:263.10px;width:54px;text-align:center;font-size:10px;line-height:12px;color:#111">238</div><div class="t" style="left:163px;top:262.10px;width:46px;-webkit-text-stroke:0.2px currentColor;text-align:center;font-size:9.45px;letter-spacing:0.4px;line-height:12px;color:#111">信息</div><div class="t" style="left:210px;top:262.10px;width:98px;-webkit-text-stroke:0.2px currentColor;text-align:center;font-size:9.45px;letter-spacing:0.4px;line-height:12px;color:#111">系统启动</div><div class="t" style="left:308px;top:262.10px;width:54px;-webkit-text-stroke:0.2px currentColor;text-align:center;font-size:9.45px;letter-spacing:0.4px;line-height:12px;color:#111">启动</div><div class="t" style="left:366px;top:262.10px;-webkit-text-stroke:0.2px currentColor;font-size:9.45px;letter-spacing:0.4px;line-height:12px;color:#111">EFI 时区偏移：2047。夏令时标志：0。固件...</div><div class="a" style="left:0;top:293.40px;width:574px;height:1px;background:#98a898"></div><div class="t" style="left:0;top:280.25px;width:110px;text-align:center;font-size:10px;line-height:12px;color:#111">2025-07-29 08:29:41</div><div class="t" style="left:110px;top:280.25px;width:54px;text-align:center;font-size:10px;line-height:12px;color:#111">25</div><div class="t" style="left:163px;top:279.25px;width:46px;-webkit-text-stroke:0.2px currentColor;text-align:center;font-size:9.45px;letter-spacing:0.4px;line-height:12px;color:#111">信息</div><div class="t" style="left:210px;top:279.25px;width:98px;-webkit-text-stroke:0.2px currentColor;text-align:center;font-size:9.45px;letter-spacing:0.4px;line-height:12px;color:#111">系统启动</div><div class="t" style="left:308px;top:279.25px;width:54px;-webkit-text-stroke:0.2px currentColor;text-align:center;font-size:9.45px;letter-spacing:0.4px;line-height:12px;color:#111">启动</div><div class="t" style="left:366px;top:279.25px;-webkit-text-stroke:0.2px currentColor;font-size:9.45px;letter-spacing:0.4px;line-height:12px;color:#111">引导菜单策略已设置</div><div class="a" style="left:0;top:310.55px;width:574px;height:1px;background:#98a898"></div><div class="t" style="left:0;top:297.40px;width:110px;text-align:center;font-size:10px;line-height:12px;color:#111">2025-07-29 08:29:41</div><div class="t" style="left:110px;top:297.40px;width:54px;text-align:center;font-size:10px;line-height:12px;color:#111">27</div><div class="t" style="left:163px;top:296.40px;width:46px;-webkit-text-stroke:0.2px currentColor;text-align:center;font-size:9.45px;letter-spacing:0.4px;line-height:12px;color:#111">信息</div><div class="t" style="left:210px;top:296.40px;width:98px;-webkit-text-stroke:0.2px currentColor;text-align:center;font-size:9.45px;letter-spacing:0.4px;line-height:12px;color:#111">系统启动</div><div class="t" style="left:308px;top:296.40px;width:54px;-webkit-text-stroke:0.2px currentColor;text-align:center;font-size:9.45px;letter-spacing:0.4px;line-height:12px;color:#111">启动</div><div class="t" style="left:366px;top:296.40px;-webkit-text-stroke:0.2px currentColor;font-size:9.45px;letter-spacing:0.4px;line-height:12px;color:#111">系统引导类型已确认</div><div class="a" style="left:0;top:327.70px;width:574px;height:1px;background:#98a898"></div><div class="t" style="left:0;top:314.55px;width:110px;text-align:center;font-size:10px;line-height:12px;color:#111">2025-07-29 08:29:41</div><div class="t" style="left:110px;top:314.55px;width:54px;text-align:center;font-size:10px;line-height:12px;color:#111">30</div><div class="t" style="left:163px;top:313.55px;width:46px;-webkit-text-stroke:0.2px currentColor;text-align:center;font-size:9.45px;letter-spacing:0.4px;line-height:12px;color:#111">信息</div><div class="t" style="left:210px;top:313.55px;width:98px;-webkit-text-stroke:0.2px currentColor;text-align:center;font-size:9.45px;letter-spacing:0.4px;line-height:12px;color:#111">系统启动</div><div class="t" style="left:308px;top:313.55px;width:54px;-webkit-text-stroke:0.2px currentColor;text-align:center;font-size:9.45px;letter-spacing:0.4px;line-height:12px;color:#111">启动</div><div class="t" style="left:366px;top:313.55px;-webkit-text-stroke:0.2px currentColor;font-size:9.45px;letter-spacing:0.4px;line-height:12px;color:#111">系统已报告启动指标</div><div class="a" style="left:109px;top:19px;width:1px;height:289px;background:#98a898"></div><div class="a" style="left:163px;top:19px;width:1px;height:289px;background:#98a898"></div><div class="a" style="left:210px;top:19px;width:1px;height:289px;background:#98a898"></div><div class="a" style="left:308px;top:19px;width:1px;height:289px;background:#98a898"></div><div class="a" style="left:362px;top:19px;width:1px;height:289px;background:#98a898"></div><div class="a" style="left:574px;top:0;width:13px;height:308px;background:#f0f0f0"></div><div class="a" style="left:580px;top:14px;width:2px;height:12px;background:#6a6a6a;border-radius:1px"></div></div><div class="a" style="left:13px;top:419px;width:259px;height:22px;background:#fff;border:1px solid #7a7a7a;border-bottom-color:#555"></div><div class="t" style="left:17px;top:422px;font-size:9.45px;letter-spacing:0.15px;line-height:12px;color:#8a8a8a">请输入关键词【事件ID/级别/来源/类型/描述】...</div><div class="a" style="left:278px;top:418px;width:63px;height:22px;background:#fdfdfd;border:1px solid #d5d5d5;border-radius:3px;font-size:10px;line-height:22px;text-align:center;color:#111;">搜索过滤</div><div class="a" style="left:481px;top:418px;width:56px;height:22px;background:#fdfdfd;border:1px solid #d5d5d5;border-radius:3px;font-size:10px;line-height:22px;text-align:center;color:#111;font-weight:bold;">查询</div><div class="a" style="left:545px;top:418px;width:56px;height:22px;background:#fdfdfd;border:1px solid #d5d5d5;border-radius:3px;font-size:10px;line-height:22px;text-align:center;color:#111;font-weight:bold;">退出</div><div class="a" style="left:0;top:444px;width:613px;height:1px;background:#dcdcdc"></div><div class="t" style="left:5px;top:448px;font-size:9.45px;letter-spacing:0.25px;line-height:12px;color:#2c9a3a">查询完成 (1.556分钟)</div><div class="t" style="left:454px;top:448px;font-size:9.45px;letter-spacing:0.25px;line-height:12px;color:#222">总记录数: 82561 | 当前显示: 2582</div><svg class="a" style="left:601px;top:452px" width="10" height="8" viewBox="0 0 10 8"><g fill="#aaa"><rect x="7" y="0" width="1" height="1"/><rect x="5" y="3" width="1" height="1"/><rect x="7" y="3" width="1" height="1"/><rect x="3" y="6" width="1" height="1"/><rect x="5" y="6" width="1" height="1"/><rect x="7" y="6" width="1" height="1"/></g></svg><div class="a" style="left:0;top:0;width:613px;height:462px;border:1px solid #6fa8dc;border-top-color:#0474d2;border-radius:8px"></div></div><div class="a" style="left:590px;top:268px;width:116px;height:98px;background:#fbfbfb;border:1px solid #c4c4c4;box-shadow:1px 2px 4px rgba(0,0,0,0.18)"><div class="a" style="left:0;top:0;width:18px;height:96px;background:linear-gradient(90deg,#f3f3f3,#ececec)"></div><div class="t" style="left:27px;top:1px;font-size:9.45px;letter-spacing:0.25px;line-height:12px;color:#222;-webkit-text-stroke:0.15px #222">复制单元格</div><div class="t" style="left:27px;top:19px;font-size:9.45px;letter-spacing:0.25px;line-height:12px;color:#222;-webkit-text-stroke:0.15px #222">复制行</div><div class="t" style="left:27px;top:41px;font-size:9.45px;letter-spacing:0.25px;line-height:12px;color:#222;-webkit-text-stroke:0.15px #222">联网搜索事件</div><div class="t" style="left:27px;top:63px;font-size:9.45px;letter-spacing:0.25px;line-height:12px;color:#222;-webkit-text-stroke:0.15px #222">清空记录</div><div class="t" style="left:27px;top:84px;font-size:9.45px;letter-spacing:0.25px;line-height:12px;color:#222;-webkit-text-stroke:0.15px #222">导出为CSV</div><div class="a" style="left:25px;top:36px;width:88px;height:1px;background:#d7d7d7"></div><div class="a" style="left:25px;top:58px;width:88px;height:1px;background:#d7d7d7"></div><div class="a" style="left:25px;top:80px;width:88px;height:1px;background:#d7d7d7"></div></div><div class="t" style="left:907px;top:537px;font-size:14px;letter-spacing:0.3px;line-height:17px;color:#fff;text-shadow:0 0 2px rgba(0,0,0,0.35)">吾爱破解论坛</div><div class="t" style="left:907px;top:554px;font-size:12.3px;line-height:14px;color:#fff;text-shadow:0 0 2px rgba(0,0,0,0.35)">www.52pojie.cn</div></body></html>
